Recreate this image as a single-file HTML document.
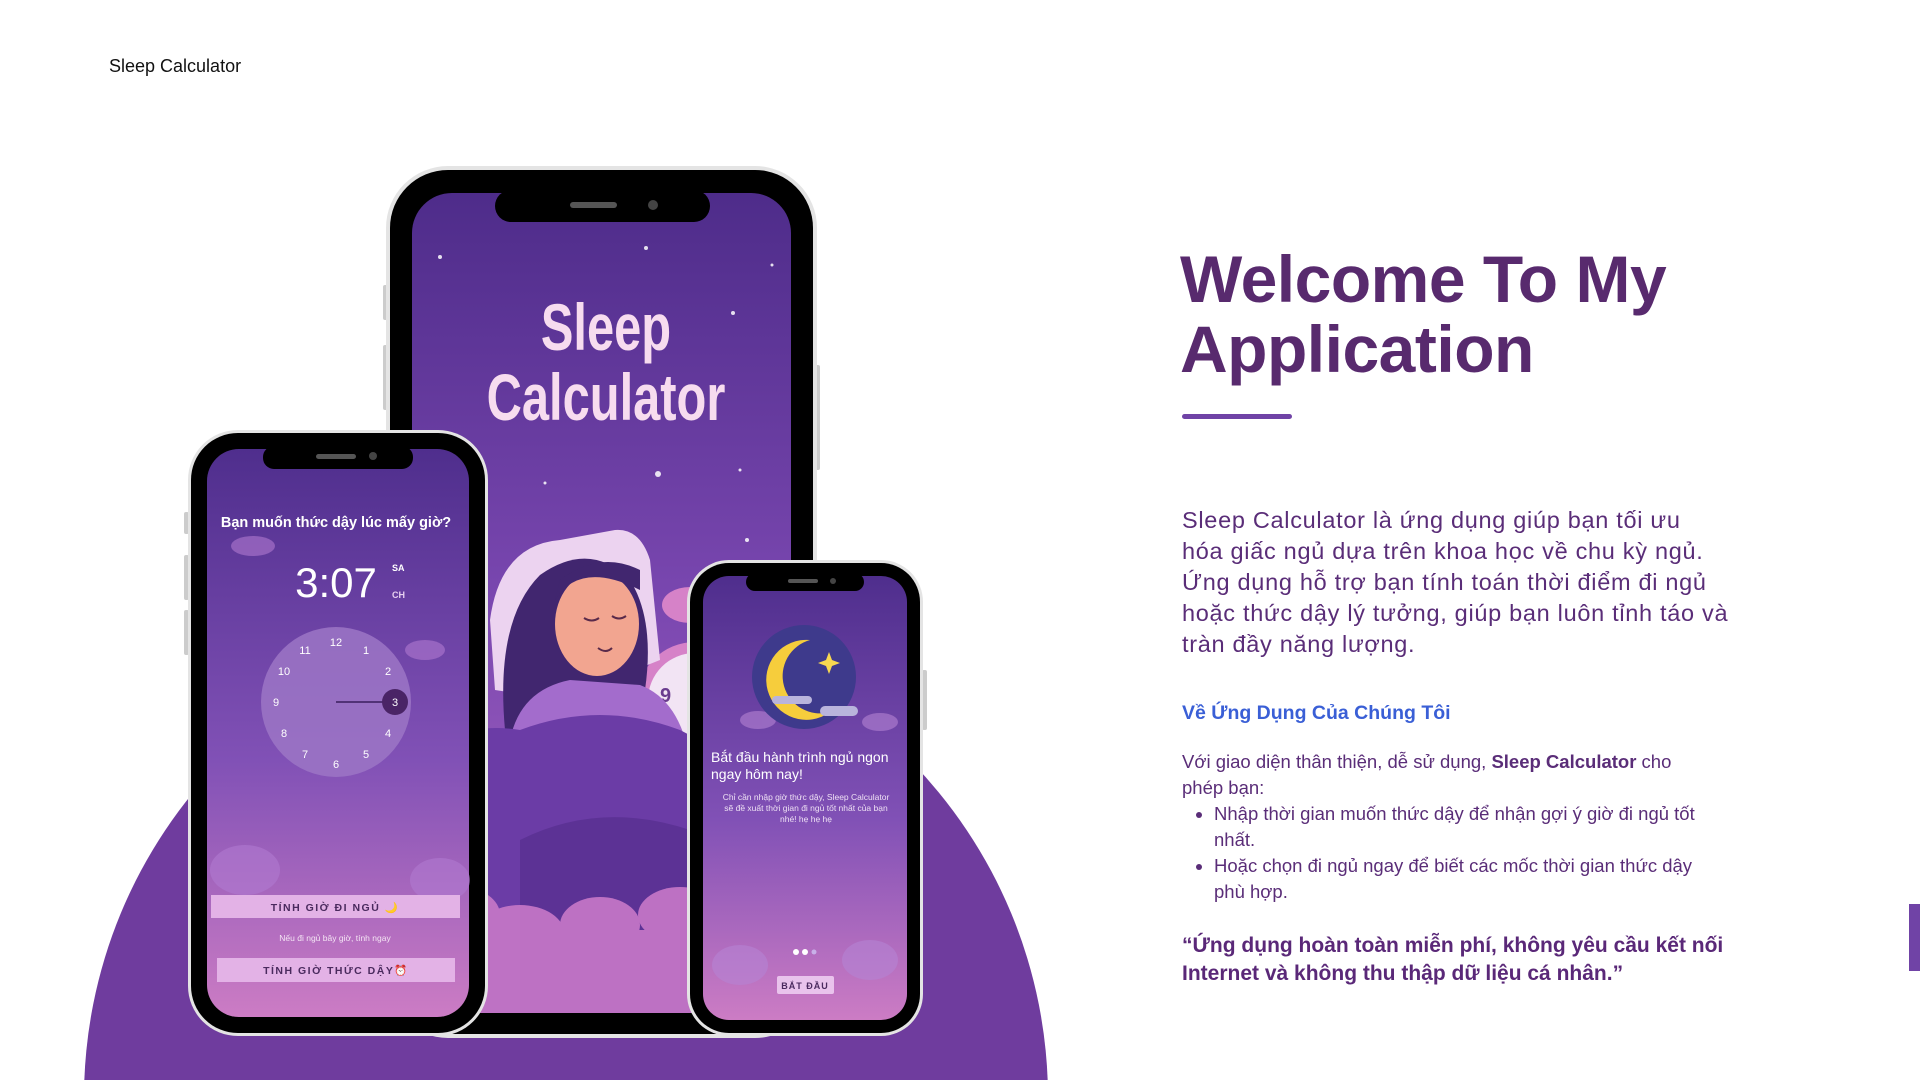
<!DOCTYPE html>
<html><head><meta charset="utf-8">
<style>
*{margin:0;padding:0;box-sizing:border-box}
html,body{width:1920px;height:1080px;overflow:hidden}
body{background:#fff;position:relative;font-family:"Liberation Sans","DejaVu Sans",sans-serif}
.abs{position:absolute}
.brand{left:109px;top:56px;font-size:18px;color:#111}
h1{position:absolute;left:1180px;top:244px;font-size:66px;line-height:70px;font-weight:800;color:#582a6e;letter-spacing:-0.5px}
.ul{left:1182px;top:414px;width:110px;height:5px;background:#7043a6;border-radius:3px}
.para{left:1182px;top:505px;width:560px;font-size:23.5px;line-height:31px;color:#5a2d78;letter-spacing:0.7px}
.h2{left:1182px;top:702px;font-size:19.5px;font-weight:bold;color:#3a5fd6}
.body{left:1182px;top:749px;width:525px;font-size:18.5px;line-height:26px;color:#5a2d78}
.body ul{margin-left:32px}
.quote{left:1182px;top:932px;width:560px;font-size:21px;line-height:28px;font-weight:bold;color:#5a2878}
.bar{left:1909px;top:904px;width:11px;height:67px;background:#7043a6}
</style></head><body>
<div class="abs brand">Sleep Calculator</div>

<svg class="abs" style="left:0;top:0" width="1920" height="1080">
  <circle cx="566" cy="1098" r="482" fill="#6f3c9e"/>
  <rect x="383" y="285" width="6" height="35" rx="2" fill="#ccc"/>
  <rect x="383" y="345" width="6" height="65" rx="2" fill="#ccc"/>
  <rect x="814" y="365" width="6" height="105" rx="2" fill="#ccc"/>
  <rect x="386" y="166" width="431" height="872" rx="62" fill="#e4e4e4"/>
  <rect x="390" y="170" width="423" height="864" rx="58" fill="#000"/>
  <defs>
    <linearGradient id="g1" x1="0" y1="0" x2="0" y2="1">
      <stop offset="0" stop-color="#4e2c8a"/><stop offset="0.5" stop-color="#7a47b0"/><stop offset="0.8" stop-color="#9a5cbc"/><stop offset="1" stop-color="#c77bc6"/>
    </linearGradient>
    <linearGradient id="g2" x1="0" y1="0" x2="0" y2="1">
      <stop offset="0" stop-color="#4f2e8d"/><stop offset="0.55" stop-color="#8151b6"/><stop offset="1" stop-color="#cc7cc4"/>
    </linearGradient>
    <clipPath id="c1"><rect x="412" y="193" width="379" height="820" rx="40"/></clipPath>
  </defs>
  <rect x="412" y="193" width="379" height="820" rx="40" fill="url(#g1)"/>
  <g clip-path="url(#c1)">
    <g fill="#fff" opacity=".85">
      <circle cx="440" cy="257" r="2"/><circle cx="646" cy="248" r="2"/><circle cx="772" cy="265" r="1.5"/><circle cx="733" cy="313" r="2"/>
      <circle cx="446" cy="480" r="1.5"/><circle cx="658" cy="474" r="3"/><circle cx="740" cy="470" r="1.5"/><circle cx="545" cy="483" r="1.5"/><circle cx="747" cy="540" r="2"/>
    </g>
    <circle cx="695" cy="700" r="58" fill="#d682c8"/>
    <circle cx="695" cy="700" r="47" fill="#f2e4f4"/>
    <text x="660" y="702" font-size="20" font-weight="bold" fill="#6a3b8e">9</text>
    <ellipse cx="690" cy="605" rx="28" ry="18" fill="#d682c8"/>
    <path d="M490 620 Q500 545 560 540 L615 530 Q640 528 650 560 L660 660 L560 700 L495 690 Z" fill="#ecd3f0"/>
    <path d="M505 730 Q495 620 540 575 Q590 540 630 580 Q655 620 645 690 L610 720 Z" fill="#41266f"/>
    <ellipse cx="597" cy="624" rx="42" ry="52" fill="#f2a590"/>
    <path d="M555 600 Q580 560 640 590 L640 570 Q600 550 560 580 Z" fill="#41266f"/>
    <path d="M584 618 q8 5 15 0 M612 616 q7 5 14 0 M598 648 q8 6 14 0" stroke="#5a2a4a" stroke-width="2" fill="none"/>
    <path d="M510 740 Q520 690 570 680 L640 685 Q680 700 690 760 L690 800 L510 800 Z" fill="#a36ccc"/>
    <path d="M412 760 Q460 720 520 730 Q600 700 680 730 Q720 750 760 780 L791 1013 L412 1013 Z" fill="#6b3ca6"/>
    <path d="M520 840 Q600 800 690 830 L700 1013 L520 1013 Z" fill="#5c3295"/>
    <g fill="#c878c8" opacity=".9">
      <ellipse cx="460" cy="915" rx="40" ry="28"/><ellipse cx="520" cy="935" rx="45" ry="30"/><ellipse cx="600" cy="925" rx="40" ry="28"/><ellipse cx="680" cy="915" rx="42" ry="28"/><ellipse cx="750" cy="935" rx="40" ry="28"/>
      <rect x="412" y="930" width="379" height="83"/>
    </g>
  </g>
  <text x="606" y="350" font-size="66" font-weight="bold" fill="#f7dcef" text-anchor="middle" transform="translate(606 0) scale(0.74 1) translate(-606 0)">Sleep</text>
  <text x="606" y="420" font-size="66" font-weight="bold" fill="#f7dcef" text-anchor="middle" transform="translate(606 0) scale(0.74 1) translate(-606 0)">Calculator</text>
  <rect x="495" y="190" width="215" height="32" rx="16" fill="#000"/>
  <rect x="570" y="202" width="47" height="6" rx="3" fill="#555"/>
  <circle cx="653" cy="205" r="5" fill="#444"/>

  <rect x="184" y="512" width="5" height="22" rx="2" fill="#ccc"/>
  <rect x="184" y="555" width="5" height="45" rx="2" fill="#ccc"/>
  <rect x="184" y="610" width="5" height="45" rx="2" fill="#ccc"/>
  <rect x="188" y="430" width="300" height="606" rx="50" fill="#e4e4e4"/>
  <rect x="191" y="433" width="294" height="600" rx="47" fill="#000"/>
  <rect x="207" y="449" width="262" height="568" rx="32" fill="url(#g2)"/>
  <rect x="263" y="446" width="150" height="23" rx="11" fill="#000"/>
  <rect x="316" y="454" width="40" height="5" rx="2.5" fill="#555"/>
  <circle cx="373" cy="456" r="4" fill="#444"/>
  <g fill="#b07ad0" opacity=".6"><ellipse cx="253" cy="546" rx="22" ry="10"/><ellipse cx="425" cy="650" rx="20" ry="10"/><ellipse cx="245" cy="870" rx="35" ry="25"/><ellipse cx="440" cy="880" rx="30" ry="22"/></g>
  <text x="336" y="527" font-size="14.5" font-weight="bold" fill="#fff" text-anchor="middle">Bạn muốn thức dậy lúc mấy giờ?</text>
  <text x="336" y="597" font-size="42" fill="#fff" text-anchor="middle">3:07</text>
  <text x="392" y="571" font-size="9" font-weight="bold" fill="#fff">SA</text>
  <text x="392" y="598" font-size="9" font-weight="bold" fill="#e7d0f0">CH</text>
  <circle cx="336" cy="702" r="75" fill="#9c76c6" opacity=".85"/>
  <g font-size="11" fill="#fff" text-anchor="middle">
    <text x="336" y="646">12</text><text x="366" y="654">1</text><text x="388" y="675">2</text><text x="388" y="737">4</text><text x="366" y="758">5</text><text x="336" y="768">6</text><text x="305" y="758">7</text><text x="284" y="737">8</text><text x="276" y="706">9</text><text x="284" y="675">10</text><text x="305" y="654">11</text>
  </g>
  <line x1="336" y1="702" x2="393" y2="702" stroke="#3a1f5c" stroke-width="1.5"/>
  <circle cx="395" cy="702" r="13" fill="#4a2466"/>
  <text x="395" y="706" font-size="11" fill="#fff" text-anchor="middle">3</text>
  <rect x="211" y="895" width="249" height="23" fill="#e3b2e6"/>
  <text x="335" y="911" font-size="10.5" font-weight="bold" fill="#4a2a5e" text-anchor="middle" letter-spacing="1.5">TÍNH GIỜ ĐI NGỦ 🌙</text>
  <text x="335" y="941" font-size="8.5" fill="#f4e4f4" text-anchor="middle">Nếu đi ngủ bây giờ, tính ngay</text>
  <rect x="217" y="958" width="238" height="24" fill="#e3b2e6"/>
  <text x="336" y="974" font-size="10.5" font-weight="bold" fill="#4a2a5e" text-anchor="middle" letter-spacing="1.5">TÍNH GIỜ THỨC DẬY⏰</text>

  <rect x="922" y="670" width="5" height="60" rx="2" fill="#ccc"/>
  <rect x="687" y="560" width="236" height="476" rx="42" fill="#e4e4e4"/>
  <rect x="690" y="563" width="230" height="470" rx="39" fill="#000"/>
  <rect x="703" y="576" width="204" height="444" rx="26" fill="url(#g2)"/>
  <rect x="746" y="573" width="118" height="18" rx="9" fill="#000"/>
  <rect x="788" y="579" width="30" height="4" rx="2" fill="#555"/>
  <circle cx="833" cy="581" r="3" fill="#444"/>
  <g fill="#b584d4" opacity=".6"><ellipse cx="740" cy="965" rx="28" ry="20"/><ellipse cx="870" cy="960" rx="28" ry="20"/><ellipse cx="758" cy="720" rx="18" ry="9"/><ellipse cx="880" cy="722" rx="18" ry="9"/></g>
  <circle cx="804" cy="677" r="52" fill="#3e3a8c"/>
  <path d="M810 640 A40 40 0 1 0 830 712 A32 32 0 1 1 810 640 Z" fill="#f6cd3c"/>
  <path d="M826 660 l3 -8 l3 8 l8 3 l-8 3 l-3 8 l-3 -8 l-8 -3 Z" fill="#f8d850"/>
  <rect x="772" y="696" width="40" height="8" rx="4" fill="#b9b4dc"/>
  <rect x="820" y="706" width="38" height="10" rx="5" fill="#b9b4dc"/>
  <text x="711" y="762" font-size="14" fill="#fff">Bắt đầu hành trình ngủ ngon</text>
  <text x="711" y="779" font-size="14" fill="#fff">ngay hôm nay!</text>
  <g font-size="8.5" fill="#eee0f4" text-anchor="middle">
    <text x="806" y="800">Chỉ cần nhập giờ thức dậy, Sleep Calculator</text>
    <text x="806" y="811">sẽ đề xuất thời gian đi ngủ tốt nhất của bạn</text>
    <text x="806" y="822">nhé! hẹ hẹ hẹ</text>
  </g>
  <circle cx="796" cy="952" r="3" fill="#fff"/><circle cx="805" cy="952" r="3" fill="#fff"/><circle cx="814" cy="952" r="2.5" fill="#c8b0e8"/>
  <rect x="777" y="976" width="57" height="18" rx="2" fill="#e9c3ec"/>
  <text x="805" y="989" font-size="9" font-weight="bold" fill="#4a2a5e" text-anchor="middle" letter-spacing="1">BẮT ĐẦU</text>
</svg>

<h1>Welcome To My<br>Application</h1>
<div class="abs ul"></div>
<div class="abs para">Sleep Calculator là ứng dụng giúp bạn tối ưu<br>hóa giấc ngủ dựa trên khoa học về chu kỳ ngủ.<br>Ứng dụng hỗ trợ bạn tính toán thời điểm đi ngủ<br>hoặc thức dậy lý tưởng, giúp bạn luôn tỉnh táo và<br>tràn đầy năng lượng.</div>
<div class="abs h2">Về Ứng Dụng Của Chúng Tôi</div>
<div class="abs body">Với giao diện thân thiện, dễ sử dụng, <b>Sleep Calculator</b> cho<br>phép bạn:
<ul><li>Nhập thời gian muốn thức dậy để nhận gợi ý giờ đi ngủ tốt nhất.</li><li>Hoặc chọn đi ngủ ngay để biết các mốc thời gian thức dậy phù hợp.</li></ul></div>
<div class="abs quote">“Ứng dụng hoàn toàn miễn phí, không yêu cầu kết nối Internet và không thu thập dữ liệu cá nhân.”</div>
<div class="abs bar"></div>
</body></html>
